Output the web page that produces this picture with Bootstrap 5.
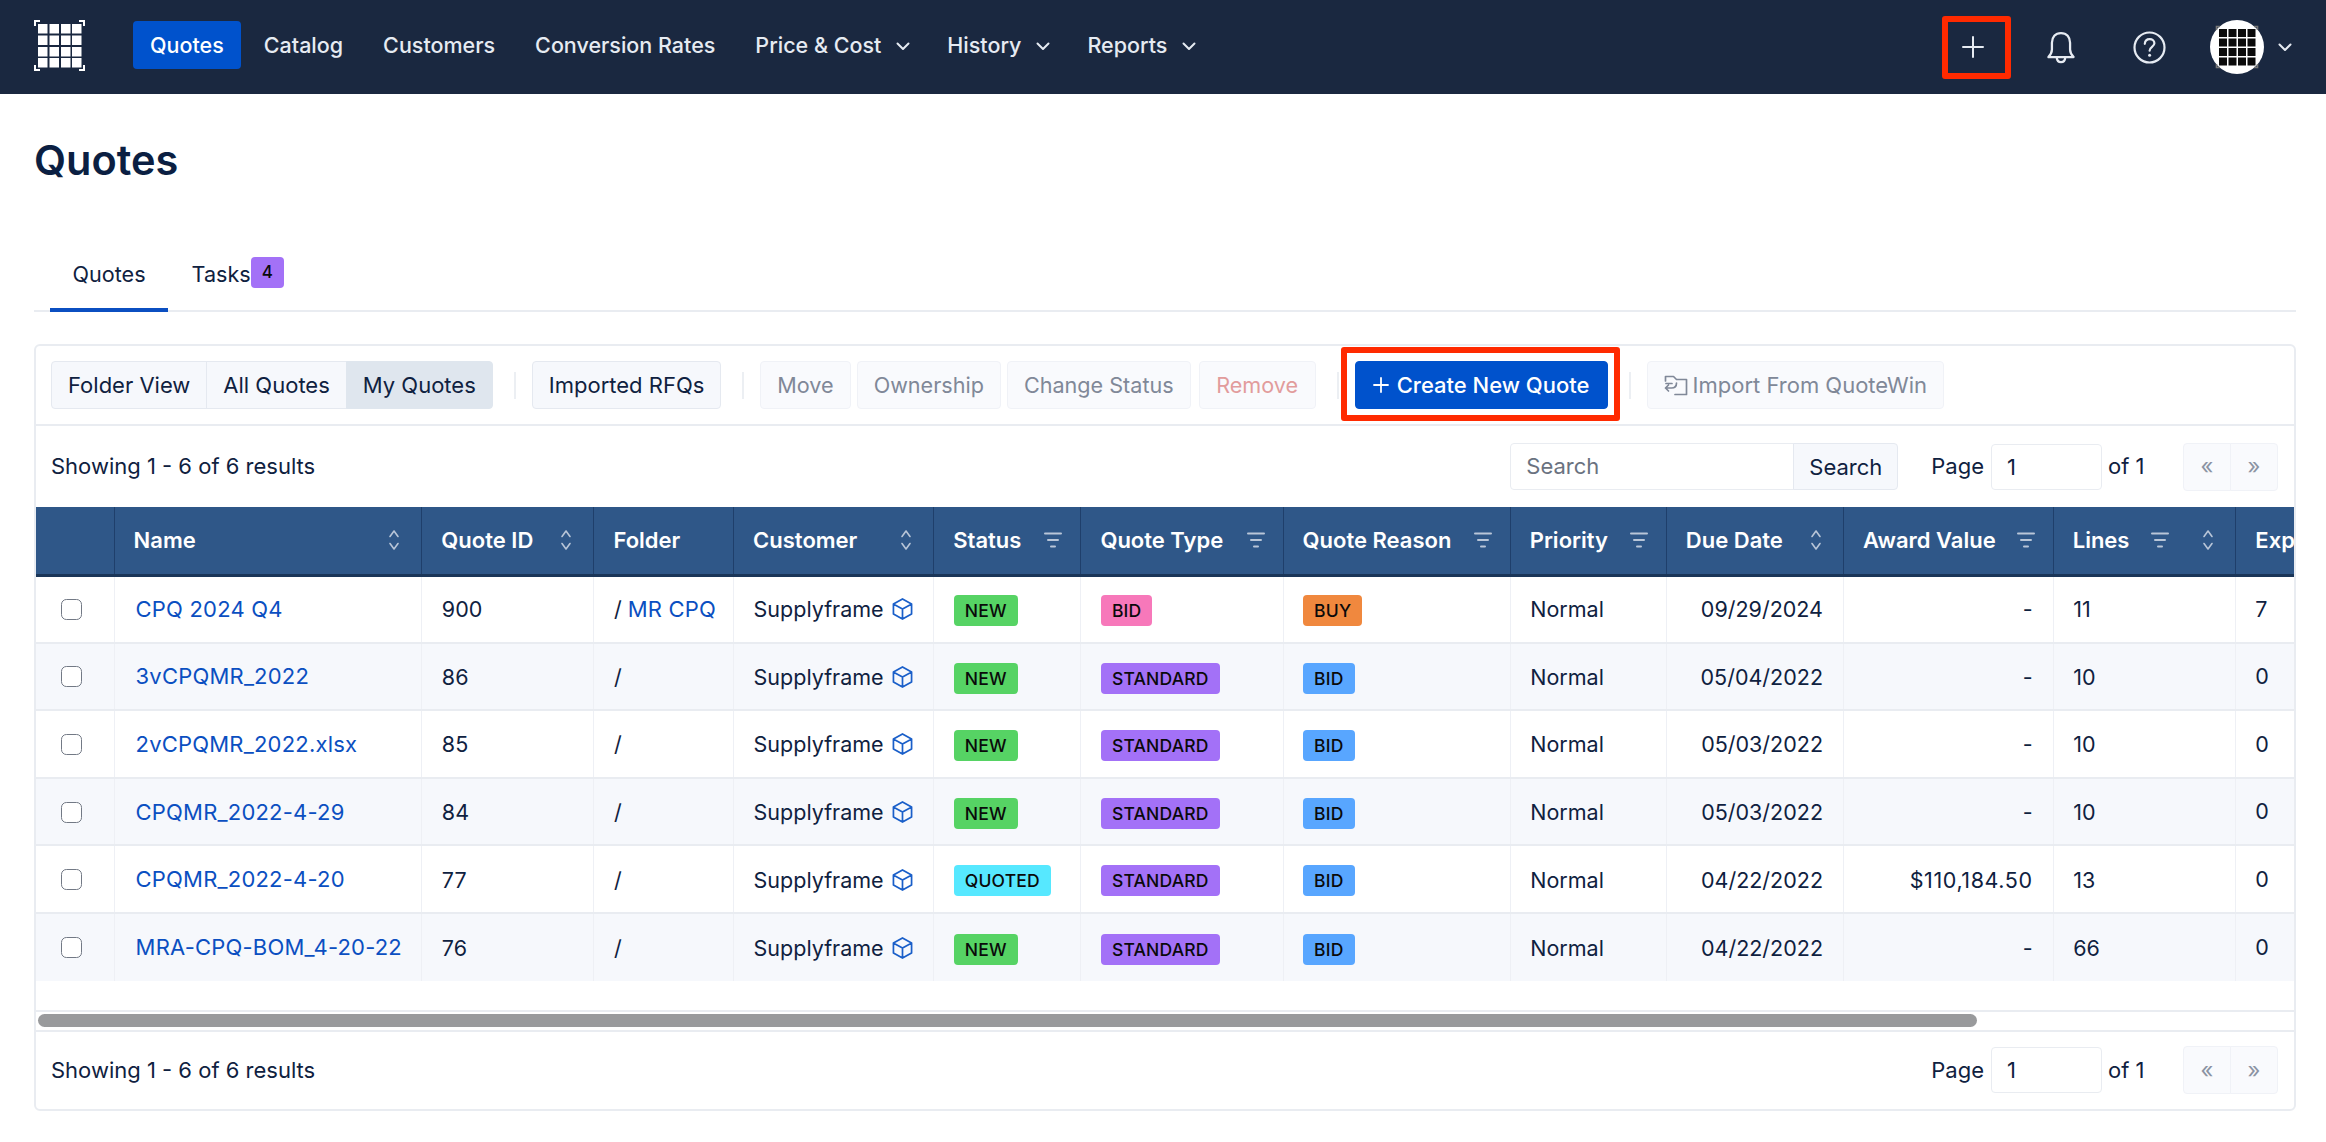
<!DOCTYPE html>
<html lang="en">
<head>
<meta charset="utf-8">
<title>Quotes</title>
<link href="https://cdn.jsdelivr.net/npm/bootstrap@5.3.0/dist/css/bootstrap.min.css" rel="stylesheet">
<style>
html,body{height:100%;overflow:hidden}
body{font-family:Inter,"Liberation Sans",sans-serif;font-size:22px;color:#0f2140;background:#fff}
.topbar{height:94px;background:#1a2840;flex-wrap:nowrap;display:flex;align-items:center;justify-content:space-between;--bs-navbar-padding-x:34px;--bs-navbar-padding-y:0}
.brand-side{display:flex;align-items:center}
.brand-mark{display:block;width:51px;height:51px;margin-right:48px;margin-top:-4px}
.topnav{gap:6px;align-items:center;flex-direction:row;margin-top:-4px}
.topnav .nav-link{color:#e6ebf2;font-size:21.500px;font-weight:500;line-height:48px;padding:0 17px;border-radius:4px;display:flex;align-items:center;white-space:nowrap}
.topnav .nav-link.active{background:#0052cc;color:#fff}
.topnav .nav-link.has-cv{padding-right:14px}
.topnav .cv{margin-left:15px;margin-top:2px}
.tools{display:flex;align-items:center;color:#e6ebf2}
.tool-slot{width:88px;height:63px;display:flex;align-items:center;justify-content:center;position:relative}
.red-box{position:absolute;border:6px solid #ff2a00;border-radius:3px;pointer-events:none}
.red-plus{left:13px;right:6px;top:0;bottom:0}
.avatar-mark{display:block;width:54px;height:54px;margin-left:17px}
.avatar-cv{margin-left:14px;color:#e6ebf2}
.page-wrap{padding:41px 30px 0 34px}
.page-title{font-size:41.500px;font-weight:600;line-height:50px;margin:0 0 58px;color:#0b1f42}
.tabbar{border-bottom:2px solid #e9ecf1;padding-left:16px;gap:1px;height:69px;margin-bottom:32px}
.tabbar .nav-link{color:#0f2140;font-size:21.600px;line-height:31px;padding:16px 22.500px 0;height:69px;border-bottom:4px solid transparent;margin-bottom:-2px;display:flex;align-items:flex-start}
.tabbar .nav-link.active{border-bottom-color:#0b4fc1}
.tabbar .tab-count{background:#a371f7;color:#0a0a0a;font-size:17px;font-weight:500;padding:0;width:33px;height:31px;line-height:31px;border-radius:4px;margin-top:-2px;display:block;text-align:center}
.sheet{border:2px solid #e9ecf1;border-radius:6px;overflow:hidden}
.tb1{height:80px;padding:0 15px;border-bottom:2px solid #e9ecf1;display:flex;align-items:center}
.tb2{height:81px;padding:0 16px 0 15px;display:flex;align-items:center;justify-content:space-between}
.soft{--bs-btn-font-size:22px;--bs-btn-bg:#f6f8fc;--bs-btn-border-color:#e5e9f0;--bs-btn-color:#0f2140;--bs-btn-hover-bg:#eef1f7;--bs-btn-hover-border-color:#e5e9f0;--bs-btn-hover-color:#0f2140;--bs-btn-active-bg:#dfe6ee;--bs-btn-active-border-color:#dfe6ee;--bs-btn-active-color:#0f2140;--bs-btn-disabled-bg:#f9fafd;--bs-btn-disabled-border-color:#f0f2f7;--bs-btn-disabled-color:#808898;--bs-btn-disabled-opacity:1;--bs-btn-border-width:1.500px;--bs-btn-border-radius:4px;--bs-btn-padding-x:16px;--bs-btn-padding-y:0;height:48px;line-height:45px;white-space:nowrap}
.soft.danger-soft{--bs-btn-disabled-color:#e29c9c;--bs-btn-padding-x:16.500px;margin-left:2px}
.vsep{width:2px;height:27px;background:#eceff3;flex:none;margin:0 16px 0 21px}
.tight-row{display:flex;gap:6px}
.tight-row .soft{--bs-btn-font-size:21.600px}
.primary-cta{--bs-btn-font-size:22px;--bs-btn-bg:#0052cc;--bs-btn-border-color:#0052cc;--bs-btn-color:#fff;--bs-btn-hover-bg:#0052cc;--bs-btn-hover-border-color:#0052cc;--bs-btn-hover-color:#fff;--bs-btn-border-radius:4px;--bs-btn-padding-x:0;--bs-btn-padding-y:0;height:48px;line-height:46px;font-weight:500;white-space:nowrap;display:flex;align-items:center;justify-content:center;gap:8px}
.cta-slot{position:relative;width:253px;flex:none}
.red-cta{left:-14px;right:-12px;top:-14px;bottom:-12px}
.disabled-ic{display:flex;align-items:center;gap:5px}
.searchbox{width:388px;height:47px}
.searchbox .form-control{font-size:22px;padding:0 15px;border:1.500px solid #e9ecf1;border-radius:4px 0 0 4px;color:#0f2140}
.searchbox .form-control::placeholder{color:#6a7280}
.searchbox .btn{width:105px;padding:0;line-height:44px;height:47px}
.pager{display:flex;align-items:center;font-size:22px}
.pager .form-control{width:111px;height:46px;font-size:22px;padding:0 15px;border:1.500px solid #e9ecf1;border-radius:4px;margin:0 6px 0 7px;color:#0f2140}
.pager .btn-group{margin-left:38.500px}
.pager .btn{width:48px;padding:0;color:#8b93a3}
.tb2 .pager{margin-left:33px}
.right-cluster{display:flex;align-items:center}
.tbl-hold{overflow:hidden;padding-bottom:29px}
.quotes-tbl{table-layout:fixed;width:100%;margin:0;border-collapse:collapse;font-size:21.500px;color:#0f2140;--bs-table-bg:transparent;--bs-table-color:#0f2140}
.quotes-tbl > thead > tr > th{background:#2f5788;color:#fff;font-size:22px;height:68px;padding:0 20px 0 19px;font-weight:600;border:0;border-left:1.500px solid #1f3f6b;border-bottom:3px solid #1a3558;vertical-align:middle;white-space:nowrap}
.quotes-tbl > thead > tr > th:first-child{border-left:0}
.quotes-tbl > tbody > tr > td{height:67.600px;padding:1px 20px 0 19.500px;border:0;border-left:1.500px solid #eef0f5;border-bottom:2px solid #e9ecf1;vertical-align:middle;white-space:nowrap;color:#0f2140}
.quotes-tbl > tbody > tr > td:first-child{border-left:0}
.quotes-tbl > tbody > tr > td:nth-child(2){padding-left:21px}
.quotes-tbl > tbody > tr:last-child > td{border-bottom:0}
.quotes-tbl > tbody > tr:nth-child(even) > td{background:#f6f8fc}
.quotes-tbl > thead > tr > th:last-child,.quotes-tbl > tbody > tr > td:last-child{padding:0 0 0 19px}
.th-in{display:flex;align-items:center;justify-content:space-between}
.th-ic{display:flex;align-items:center;gap:33px;flex:none;margin-right:1px}
.th-ic.lone-filter{margin-right:-2px}
.th-ic svg{display:block}
.quotes-tbl a{color:#0b4fc1;text-decoration:none;font-size:22px;letter-spacing:.2px}
.award-amt{letter-spacing:.6px}
.row-check{width:21px;height:21px;margin:0 0 0 5px;border:1.500px solid #727985;border-radius:4px;display:block}
.tag{display:inline-block;font-size:17.500px;font-weight:500;letter-spacing:.2px;line-height:31px;height:31px;padding:0 11px;border-radius:4px;color:#0a0a0a;vertical-align:middle}
.t-green{background:#56d364}.t-cyan{background:#56e8ff}.t-pink{background:#f778ba}.t-orange{background:#f0883e}.t-purple{background:#a371f7}.t-blue{background:#58a6ff}
.cube{vertical-align:-4px;margin-left:2px}
.rail{height:22px;border-top:2px solid #e9ecf1;border-bottom:2px solid #e9ecf1;padding:2px}
.rail-thumb{width:1939px;height:13px;border-radius:7px;background:#999a9c}
.tb3{height:77px;padding:0 16px 0 15px;display:flex;align-items:center;justify-content:space-between}
</style>
</head>
<body>
<svg width="0" height="0" class="position-absolute">
  <symbol id="i-cv" viewBox="0 0 14 9"><path d="M1.500 1.500 7 7l5.500-5.500" fill="none" stroke="currentColor" stroke-width="2" stroke-linecap="round" stroke-linejoin="round"/></symbol>
  <symbol id="i-sort" viewBox="0 0 12 24"><path d="M2 8.500 6 3l4 5.500M2 15.500 6 21l4-5.500" fill="none" stroke="#b9c6d8" stroke-width="1.600" stroke-linecap="round" stroke-linejoin="round"/></symbol>
  <symbol id="i-filter" viewBox="0 0 18 18"><path d="M1 2.500h16M4 9h10M7 15.500h4" fill="none" stroke="#b9c6d8" stroke-width="2" stroke-linecap="round"/></symbol>
  <symbol id="i-cube" viewBox="0 0 22 24"><path d="M11 1.500 20.500 6.800v10.400L11 22.500 1.500 17.200V6.800L11 1.500ZM1.800 7 11 12l9.200-5M11 12v10.500" fill="none" stroke="#1a5fc9" stroke-width="1.800" stroke-linejoin="round"/></symbol>
</svg>

<nav class="navbar topbar">
  <div class="brand-side">
    <svg class="brand-mark" viewBox="0 0 51 51" aria-label="logo">
      <path d="M1 6V1h5M45 1h5v5M50 45v5h-5M6 50H1v-5" fill="none" stroke="#fff" stroke-width="2"/>
      <g fill="#fff">
        <rect x="4" y="4" width="9.500" height="9.500"/><rect x="15.500" y="4" width="9.500" height="9.500"/><rect x="27" y="4" width="9.500" height="9.500"/><rect x="38" y="4" width="9.500" height="9.500"/>
        <rect x="4" y="15.500" width="9.500" height="9.500"/><rect x="15.500" y="15.500" width="9.500" height="9.500"/><rect x="27" y="15.500" width="9.500" height="9.500"/><rect x="38" y="15.500" width="9.500" height="9.500"/>
        <rect x="4" y="27" width="9.500" height="9.500"/><rect x="15.500" y="27" width="9.500" height="9.500"/><rect x="27" y="27" width="9.500" height="9.500"/><rect x="38" y="27" width="9.500" height="9.500"/>
        <rect x="4" y="38" width="9.500" height="9.500"/><rect x="15.500" y="38" width="9.500" height="9.500"/><rect x="27" y="38" width="9.500" height="9.500"/><rect x="38" y="38" width="9.500" height="9.500"/>
      </g>
    </svg>
    <ul class="navbar-nav topnav">
      <li class="nav-item"><a class="nav-link active" href="#">Quotes</a></li>
      <li class="nav-item"><a class="nav-link" href="#">Catalog</a></li>
      <li class="nav-item"><a class="nav-link" href="#">Customers</a></li>
      <li class="nav-item"><a class="nav-link" href="#">Conversion Rates</a></li>
      <li class="nav-item"><a class="nav-link has-cv" href="#">Price &amp; Cost<svg class="cv" width="14" height="9"><use href="#i-cv"/></svg></a></li>
      <li class="nav-item"><a class="nav-link has-cv" href="#">History<svg class="cv" width="14" height="9"><use href="#i-cv"/></svg></a></li>
      <li class="nav-item"><a class="nav-link has-cv" href="#">Reports<svg class="cv" width="14" height="9"><use href="#i-cv"/></svg></a></li>
    </ul>
  </div>
  <div class="tools">
    <div class="tool-slot">
      <svg width="22" height="22" viewBox="0 0 22 22"><path d="M11 1v20M1 11h20" stroke="#e6ebf2" stroke-width="2" stroke-linecap="round"/></svg>
      <span class="red-box red-plus"></span>
    </div>
    <div class="tool-slot">
      <svg width="30" height="33" viewBox="0 0 28 32"><path d="M14 2c-5.500 0-8.800 4-8.800 9.500v6.500C5.200 21 4 23 1.800 25.300h24.400C24 23 22.800 21 22.800 18v-6.500C22.800 6 19.500 2 14 2ZM9.800 25.500c.3 3 2 4.700 4.200 4.700s3.900-1.700 4.200-4.700" fill="none" stroke="#e6ebf2" stroke-width="2.200" stroke-linejoin="round"/></svg>
    </div>
    <div class="tool-slot">
      <svg width="33" height="33" viewBox="0 0 33 33"><circle cx="16.500" cy="16.500" r="15" fill="none" stroke="#e6ebf2" stroke-width="2.200"/><path d="M11.800 12.800c.2-3 2.300-4.600 4.900-4.600 2.700 0 4.700 1.700 4.700 4.100 0 3.500-4.800 3.700-4.800 7.400" fill="none" stroke="#e6ebf2" stroke-width="2.200" stroke-linecap="round"/><circle cx="16.600" cy="24.300" r="1.500" fill="#e6ebf2"/></svg>
    </div>
    <svg class="avatar-mark" viewBox="0 0 54 54" aria-label="avatar">
      <circle cx="27" cy="27" r="27" fill="#fff"/>
      <path d="M6.500 10V6.500H10M44 6.500h3.500V10M47.500 44v3.500H44M10 47.500H6.500V44" fill="none" stroke="#777" stroke-width="1.600"/>
      <g fill="#0a0a0a">
        <rect x="9" y="9" width="8" height="8"/><rect x="18.500" y="9" width="8" height="8"/><rect x="28" y="9" width="8" height="8"/><rect x="37.500" y="9" width="8" height="8"/>
        <rect x="9" y="18.500" width="8" height="8"/><rect x="18.500" y="18.500" width="8" height="8"/><rect x="28" y="18.500" width="8" height="8"/><rect x="37.500" y="18.500" width="8" height="8"/>
        <rect x="9" y="28" width="8" height="8"/><rect x="18.500" y="28" width="8" height="8"/><rect x="28" y="28" width="8" height="8"/><rect x="37.500" y="28" width="8" height="8"/>
        <rect x="9" y="37.500" width="8" height="8"/><rect x="18.500" y="37.500" width="8" height="8"/><rect x="28" y="37.500" width="8" height="8"/><rect x="37.500" y="37.500" width="8" height="8"/>
      </g>
    </svg>
    <svg class="avatar-cv" width="14" height="9"><use href="#i-cv"/></svg>
  </div>
</nav>

<main class="page-wrap">
  <h1 class="page-title">Quotes</h1>
  <ul class="nav tabbar">
    <li class="nav-item"><a class="nav-link active" href="#">Quotes</a></li>
    <li class="nav-item"><a class="nav-link" href="#">Tasks<span class="badge tab-count">4</span></a></li>
  </ul>

  <section class="sheet">
    <div class="tb1">
      <div class="btn-group">
        <button class="btn soft">Folder View</button>
        <button class="btn soft">All Quotes</button>
        <button class="btn soft active">My Quotes</button>
      </div>
      <span class="vsep"></span>
      <button class="btn soft">Imported RFQs</button>
      <span class="vsep"></span>
      <div class="tight-row">
        <button class="btn soft" disabled>Move</button>
        <button class="btn soft" disabled>Ownership</button>
        <button class="btn soft" disabled>Change Status</button>
        <button class="btn soft danger-soft" disabled>Remove</button>
      </div>
      <span class="vsep"></span>
      <div class="cta-slot">
        <button class="btn primary-cta w-100"><svg width="16" height="16" viewBox="0 0 16 16"><path d="M8 1v14M1 8h14" stroke="#fff" stroke-width="1.800" stroke-linecap="round"/></svg>Create New Quote</button>
        <span class="red-box red-cta"></span>
      </div>
      <span class="vsep"></span>
      <button class="btn soft disabled-ic" disabled>
        <svg width="24" height="22" viewBox="0 0 24 22"><path d="M1.500 7V2.500h8l3 3h10v15H11M12.500 9c0 3-2 5-5 5h-6M4.500 11l-3 3 3 3M2 9.500h6" fill="none" stroke="#808898" stroke-width="1.700" stroke-linecap="round" stroke-linejoin="round"/></svg>
        Import From QuoteWin
      </button>
    </div>

    <div class="tb2">
      <span>Showing 1 - 6 of 6 results</span>
      <div class="right-cluster">
        <div class="input-group searchbox flex-nowrap">
          <input class="form-control" type="text" placeholder="Search">
          <button class="btn soft" type="button">Search</button>
        </div>
        <div class="pager">
          <span>Page</span>
          <input class="form-control" type="text" value="1">
          <span>of 1</span>
          <div class="btn-group">
            <button class="btn soft" disabled>«</button>
            <button class="btn soft" disabled>»</button>
          </div>
        </div>
      </div>
    </div>

    <div class="tbl-hold">
      <table class="table quotes-tbl">
        <colgroup>
          <col style="width:78px"><col style="width:307.500px"><col style="width:172px"><col style="width:139.500px"><col style="width:200px"><col style="width:147px"><col style="width:202px"><col style="width:227px"><col style="width:156px"><col style="width:177px"><col style="width:209.500px"><col style="width:182.500px"><col style="width:58px">
        </colgroup>
        <thead>
          <tr>
            <th></th>
            <th><div class="th-in"><span>Name</span><span class="th-ic"><svg width="12" height="24"><use href="#i-sort"/></svg></span></div></th>
            <th><div class="th-in"><span>Quote ID</span><span class="th-ic"><svg width="12" height="24"><use href="#i-sort"/></svg></span></div></th>
            <th><div class="th-in"><span>Folder</span></div></th>
            <th><div class="th-in"><span>Customer</span><span class="th-ic"><svg width="12" height="24"><use href="#i-sort"/></svg></span></div></th>
            <th><div class="th-in"><span>Status</span><span class="th-ic lone-filter"><svg width="18" height="18"><use href="#i-filter"/></svg></span></div></th>
            <th><div class="th-in"><span>Quote Type</span><span class="th-ic lone-filter"><svg width="18" height="18"><use href="#i-filter"/></svg></span></div></th>
            <th><div class="th-in"><span>Quote Reason</span><span class="th-ic lone-filter"><svg width="18" height="18"><use href="#i-filter"/></svg></span></div></th>
            <th><div class="th-in"><span>Priority</span><span class="th-ic lone-filter"><svg width="18" height="18"><use href="#i-filter"/></svg></span></div></th>
            <th><div class="th-in"><span>Due Date</span><span class="th-ic"><svg width="12" height="24"><use href="#i-sort"/></svg></span></div></th>
            <th><div class="th-in"><span>Award Value</span><span class="th-ic lone-filter"><svg width="18" height="18"><use href="#i-filter"/></svg></span></div></th>
            <th><div class="th-in"><span>Lines</span><span class="th-ic"><svg width="18" height="18"><use href="#i-filter"/></svg><svg width="12" height="24"><use href="#i-sort"/></svg></span></div></th>
            <th>Exp</th>
          </tr>
        </thead>
        <tbody>
          <tr><td><input class="form-check-input row-check" type="checkbox"></td><td><a href="#">CPQ 2024 Q4</a></td><td>900</td><td>/ <a href="#">MR CPQ</a></td><td>Supplyframe <svg class="cube" width="21" height="24"><use href="#i-cube"/></svg></td><td><span class="tag t-green">NEW</span></td><td><span class="tag t-pink">BID</span></td><td><span class="tag t-orange">BUY</span></td><td>Normal</td><td class="text-end">09/29/2024</td><td class="text-end">-</td><td>11</td><td>7</td></tr>
          <tr><td><input class="form-check-input row-check" type="checkbox"></td><td><a href="#">3vCPQMR_2022</a></td><td>86</td><td>/</td><td>Supplyframe <svg class="cube" width="21" height="24"><use href="#i-cube"/></svg></td><td><span class="tag t-green">NEW</span></td><td><span class="tag t-purple">STANDARD</span></td><td><span class="tag t-blue">BID</span></td><td>Normal</td><td class="text-end">05/04/2022</td><td class="text-end">-</td><td>10</td><td>0</td></tr>
          <tr><td><input class="form-check-input row-check" type="checkbox"></td><td><a href="#">2vCPQMR_2022.xlsx</a></td><td>85</td><td>/</td><td>Supplyframe <svg class="cube" width="21" height="24"><use href="#i-cube"/></svg></td><td><span class="tag t-green">NEW</span></td><td><span class="tag t-purple">STANDARD</span></td><td><span class="tag t-blue">BID</span></td><td>Normal</td><td class="text-end">05/03/2022</td><td class="text-end">-</td><td>10</td><td>0</td></tr>
          <tr><td><input class="form-check-input row-check" type="checkbox"></td><td><a href="#">CPQMR_2022-4-29</a></td><td>84</td><td>/</td><td>Supplyframe <svg class="cube" width="21" height="24"><use href="#i-cube"/></svg></td><td><span class="tag t-green">NEW</span></td><td><span class="tag t-purple">STANDARD</span></td><td><span class="tag t-blue">BID</span></td><td>Normal</td><td class="text-end">05/03/2022</td><td class="text-end">-</td><td>10</td><td>0</td></tr>
          <tr><td><input class="form-check-input row-check" type="checkbox"></td><td><a href="#">CPQMR_2022-4-20</a></td><td>77</td><td>/</td><td>Supplyframe <svg class="cube" width="21" height="24"><use href="#i-cube"/></svg></td><td><span class="tag t-cyan">QUOTED</span></td><td><span class="tag t-purple">STANDARD</span></td><td><span class="tag t-blue">BID</span></td><td>Normal</td><td class="text-end">04/22/2022</td><td class="text-end"><span class="award-amt">$110,184.50</span></td><td>13</td><td>0</td></tr>
          <tr><td><input class="form-check-input row-check" type="checkbox"></td><td><a href="#">MRA-CPQ-BOM_4-20-22</a></td><td>76</td><td>/</td><td>Supplyframe <svg class="cube" width="21" height="24"><use href="#i-cube"/></svg></td><td><span class="tag t-green">NEW</span></td><td><span class="tag t-purple">STANDARD</span></td><td><span class="tag t-blue">BID</span></td><td>Normal</td><td class="text-end">04/22/2022</td><td class="text-end">-</td><td>66</td><td>0</td></tr>
        </tbody>
      </table>
    </div>
    <div class="rail"><div class="rail-thumb"></div></div>

    <div class="tb3">
      <span>Showing 1 - 6 of 6 results</span>
      <div class="pager">
        <span>Page</span>
        <input class="form-control" type="text" value="1">
        <span>of 1</span>
        <div class="btn-group">
          <button class="btn soft" disabled>«</button>
          <button class="btn soft" disabled>»</button>
        </div>
      </div>
    </div>
  </section>
</main>
<script src="https://cdn.jsdelivr.net/npm/bootstrap@5.3.0/dist/js/bootstrap.bundle.min.js"></script>
</body>
</html>
